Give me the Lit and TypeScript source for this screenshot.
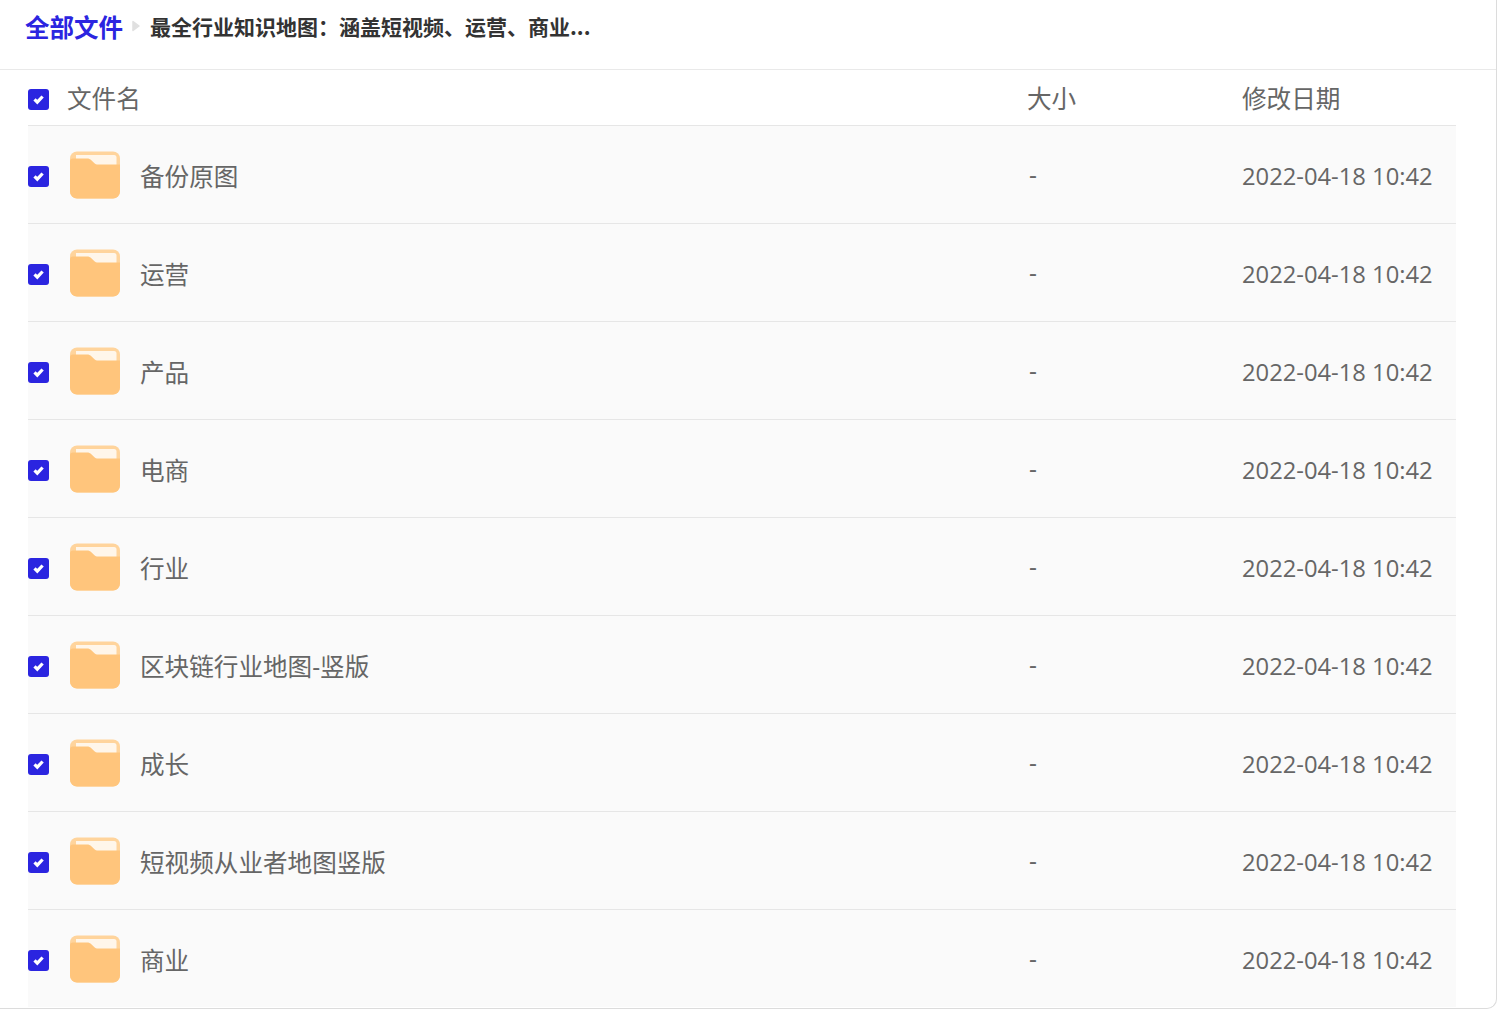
import { LitElement, html, css, svg } from "lit";
import { customElement } from "lit/decorators.js";

const NAMES = ["备份原图", "运营", "产品", "电商", "行业", "区块链行业地图-竖版", "成长", "短视频从业者地图竖版", "商业"];
const DATE = "2022-04-18 10:42";

const check = html`<span class="check"><svg width="13" height="11" viewBox="0 0 13 11"><path d="M2.500 5.400 5.300 8.200 10.600 2.500" fill="none" stroke="#fff" stroke-width="3.200"/></svg></span>`;

const folder = svg`<svg class="folder" width="50" height="48" viewBox="0 0 50 48">
  <rect x="0" y="0.500" width="50" height="47" rx="7" fill="#ffd49c"/>
  <path d="M6 4H44a2.500 2.500 0 0 1 2.500 2.500V14.500H6Z" fill="#fff6ea"/>
  <path d="M0 10.500a3 3 0 0 1 3-3H17c2 0 3 .6 4.600 2l2.600 2.400c1.200 1 2.200 1.600 4 1.600H50V40.500a7 7 0 0 1-7 7H7a7 7 0 0 1-7-7Z" fill="#ffc57c"/>
</svg>`;

const arrow = svg`<svg class="arrow" width="8" height="12" viewBox="0 0 8 12"><path d="M1 1.500 7 6 1 10.500Z" fill="#e0e0e0" stroke="#e0e0e0" stroke-width="1.500" stroke-linejoin="round"/></svg>`;

@customElement("app-root")
export class AppRoot extends LitElement {
  static styles = css`
    :host {
      display: block;
      width: 1508px;
      height: 1028px;
      background: #fff;
      font-family: "Open Sans", "Noto Sans CJK SC", sans-serif;
      overflow: hidden;
    }
    .card {
      width: 1497px;
      height: 1009px;
      box-sizing: border-box;
      border-right: 1px solid #dcdcdc;
      border-bottom: 1px solid #dcdcdc;
      border-bottom-right-radius: 10px;
      overflow: hidden;
    }
    .crumbs {
      height: 70px;
      box-sizing: border-box;
      padding: 0 0 17px 25px;
      border-bottom: 1px solid #e9e9e9;
      display: flex;
      align-items: center;
      font-family: "Noto Sans CJK SC", sans-serif;
      font-weight: 700;
    }
    .root { font-size: 24.500px; color: #2b25e0; }
    .arrow { flex: none; margin: 0 10px 0 9px; }
    .current { font-size: 21px; color: #333; }
    .table { margin-left: 28px; width: 1428px; }
    .row {
      display: grid;
      grid-template-columns: 999px 215px 1fr;
      align-items: center;
      box-sizing: border-box;
      border-bottom: 1px solid #e6e6e6;
      color: #666;
      font-size: 24.600px;
    }
    .head { height: 56px; padding-top: 1px; }
    .item { height: 98px; background: #fafafa; padding-top: 2px; }
    .item:last-child { border-bottom: none; height: 97px; }
    .name { display: flex; align-items: center; }
    .label { margin-bottom: 2px; }
    .check {
      width: 21px; height: 21px; border-radius: 3px;
      background: #2b25e0;
      display: inline-flex; align-items: center; justify-content: center;
      flex: none;
      margin-top: 2px;
    }
    .head .check { margin-right: 18px; }
    .item .check { margin-right: 21px; }
    .folder { flex: none; margin: 0 20px 2px 0; }
    .date { font-size: 23.750px; white-space: nowrap; }
    .size { padding-left: 2px; }
    .head .size { padding-left: 0; }
  `;

  render() {
    return html`
      <div class="card">
        <div class="crumbs">
          <span class="root">全部文件</span>
          ${arrow}
          <span class="current">最全行业知识地图：涵盖短视频、运营、商业...</span>
        </div>
        <div class="table">
          <div class="row head">
            <div class="name">${check}<span class="label">文件名</span></div>
            <div class="size label">大小</div>
            <div class="label">修改日期</div>
          </div>
          ${NAMES.map(
            (n) => html`<div class="row item">
              <div class="name">${check}${folder}<span class="label">${n}</span></div>
              <div class="size label">-</div>
              <div class="date">${DATE}</div>
            </div>`
          )}
        </div>
      </div>
    `;
  }
}
